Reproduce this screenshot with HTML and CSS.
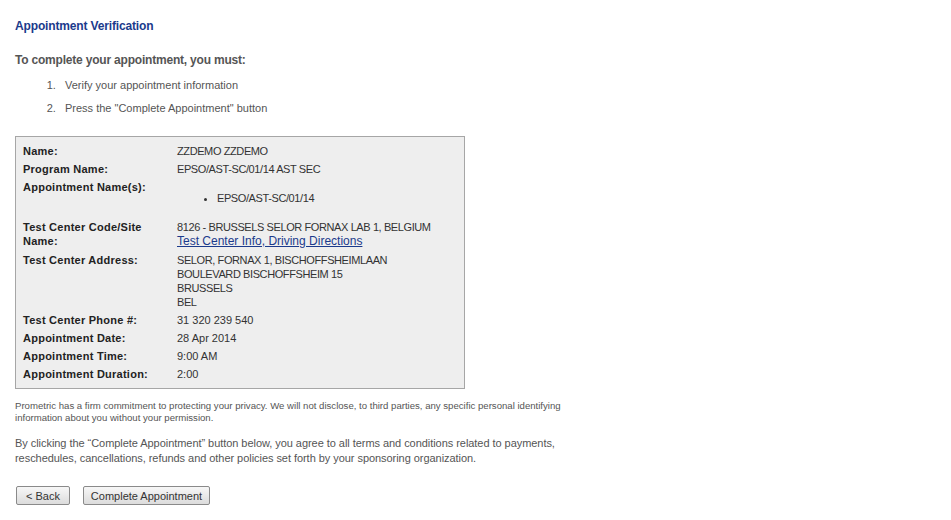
FILE: index.html
```html
<!DOCTYPE html>
<html lang="en">
<head>
    <meta charset="UTF-8">
    <meta name="viewport" content="width=device-width, initial-scale=1.0">
    <title>Appointment Verification</title>
    <link rel="stylesheet" href="styles.css">
</head>
<body>
    <div class="page">
        <h1 class="title">Appointment Verification</h1>

        <p class="intro">To complete your appointment, you must:</p>
        <ol class="steps">
            <li>Verify your appointment information</li>
            <li>Press the "Complete Appointment" button</li>
        </ol>

        <div class="details">
            <table>
                <tr>
                    <th>Name:</th>
                    <td class="caps">ZZDEMO ZZDEMO</td>
                </tr>
                <tr>
                    <th>Program Name:</th>
                    <td class="caps">EPSO/AST-SC/01/14 AST SEC</td>
                </tr>
                <tr>
                    <th>Appointment Name(s):</th>
                    <td class="caps">
                        <ul class="appt-list">
                            <li>EPSO/AST-SC/01/14</li>
                        </ul>
                    </td>
                </tr>
                <tr>
                    <th>Test Center Code/Site Name:</th>
                    <td>
                        <span class="caps">8126 - BRUSSELS SELOR FORNAX LAB 1, BELGIUM</span><br>
                        <a href="#" class="info-link">Test Center Info, Driving Directions</a>
                    </td>
                </tr>
                <tr>
                    <th>Test Center Address:</th>
                    <td class="caps">
                        SELOR, FORNAX 1, BISCHOFFSHEIMLAAN<br>
                        BOULEVARD BISCHOFFSHEIM 15<br>
                        BRUSSELS<br>
                        BEL
                    </td>
                </tr>
                <tr>
                    <th>Test Center Phone #:</th>
                    <td>31 320 239 540</td>
                </tr>
                <tr>
                    <th>Appointment Date:</th>
                    <td>28 Apr 2014</td>
                </tr>
                <tr>
                    <th>Appointment Time:</th>
                    <td>9:00 AM</td>
                </tr>
                <tr>
                    <th>Appointment Duration:</th>
                    <td>2:00</td>
                </tr>
            </table>
        </div>

        <p class="privacy">Prometric has a firm commitment to protecting your privacy. We will not disclose, to third parties, any specific personal identifying information about you without your permission.</p>

        <p class="agree">By clicking the &ldquo;Complete Appointment&rdquo; button below, you agree to all terms and conditions related to payments, reschedules, cancellations, refunds and other policies set forth by your sponsoring organization.</p>

        <div class="actions">
            <button type="button" class="btn btn-back">&lt; Back</button>
            <button type="button" class="btn btn-complete">Complete Appointment</button>
        </div>
    </div>
</body>
</html>
```

FILE: styles.css
```css
body {
    margin: 0;
    padding: 0;
    background-color: #fff;
    font-family: "Liberation Sans", Arial, sans-serif;
    color: #555;
}
.page {
    padding: 19px 15px;
}
.title {
    margin: 0;
    font-size: 12px;
    line-height: 14px;
    font-weight: bold;
    letter-spacing: -0.15px;
    color: #1b3a8c;
}
.intro {
    margin: 20px 0 0;
    font-size: 12px;
    line-height: 14px;
    font-weight: bold;
    letter-spacing: -0.2px;
    color: #555;
}
.steps {
    margin: 11px 0 0;
    padding-left: 50px;
    font-size: 11px;
    line-height: 14px;
    color: #555;
}
.steps li {
    margin-bottom: 9px;
}
.steps li::marker {
    content: counter(list-item) ".\00a0\00a0\00a0";
}
.steps li:last-child {
    margin-bottom: 0;
}
.details {
    margin-top: 21px;
    width: 450px;
    box-sizing: border-box;
    border: 1px solid #a6a6a6;
    background-color: #eee;
    padding: 5px;
}
.details table {
    border-collapse: collapse;
    width: 100%;
}
.details th,
.details td {
    padding: 2px;
    vertical-align: top;
    text-align: left;
    font-size: 11px;
    line-height: 14px;
}
.details th {
    width: 150px;
    font-weight: bold;
    letter-spacing: 0.25px;
    color: #222;
}
.details td {
    color: #333;
}
.caps {
    letter-spacing: -0.4px;
}
.appt-list {
    margin: 11px 0;
    padding-left: 40px;
}
.info-link {
    font-size: 12px;
    line-height: 15px;
    color: #1b3a8c;
    text-decoration: underline;
}
.privacy {
    margin: 11px 0 0;
    width: 570px;
    font-size: 9.6px;
    line-height: 12px;
    color: #555;
}
.agree {
    margin: 12px 0 0;
    width: 560px;
    font-size: 11px;
    line-height: 15px;
    letter-spacing: -0.05px;
    color: #555;
}
.actions {
    margin-top: 20px;
    display: flex;
    gap: 13px;
    padding-left: 1px;
}
.btn {
    height: 19px;
    padding: 0;
    font-family: "Liberation Sans", Arial, sans-serif;
    font-size: 11px;
    color: #333;
    border: 1px solid #8a8a8a;
    border-radius: 2px;
    background: linear-gradient(#f7f7f7, #dcdcdc);
    cursor: pointer;
}
.btn-back {
    width: 54px;
}
.btn-complete {
    width: 127px;
}
```
